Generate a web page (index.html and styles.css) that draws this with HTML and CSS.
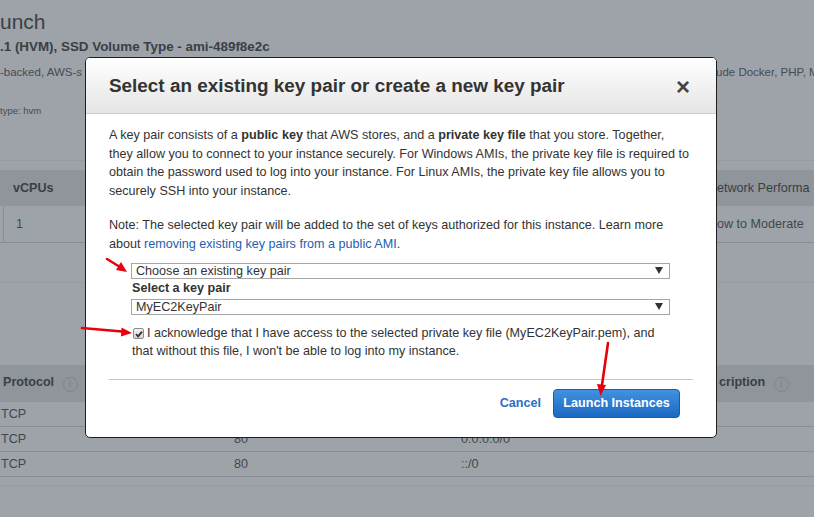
FILE: index.html
```html
<!DOCTYPE html>
<html>
<head>
<meta charset="utf-8">
<link rel="stylesheet" href="styles.css">
</head>
<body>
<div class="page">
  <div class="bg">
    <div class="bg-title">unch</div>
    <div class="bg-ami">.1 (HVM), SSD Volume Type - ami-489f8e2c</div>
    <div class="bg-desc"><span>-backed, AWS-s</span><span>ude Docker, PHP, M</span></div>
    <div class="bg-type">type: hvm</div>

    <div class="t1">
      <div class="t1-head"><span class="c1">vCPUs</span><span class="c2">etwork Performa</span></div>
      <div class="t1-row"><span class="c1">1</span><span class="c2">ow to Moderate</span></div>
      <div class="t1-gap"></div>
    </div>

    <div class="t2">
      <div class="t2-head">
        <span class="p1">Protocol <i class="info">i</i></span>
        <span class="p2"></span>
        <span class="p3"></span>
        <span class="p4">cription <i class="info">i</i></span>
      </div>
      <div class="t2-row"><span class="p1">TCP</span><span class="p2"></span><span class="p3"></span><span class="p4"></span></div>
      <div class="t2-row"><span class="p1">TCP</span><span class="p2">80</span><span class="p3">0.0.0.0/0</span><span class="p4"></span></div>
      <div class="t2-row"><span class="p1">TCP</span><span class="p2">80</span><span class="p3">::/0</span><span class="p4"></span></div>
      <div class="t2-end"></div>
    </div>
  </div>

  <div class="modal">
    <div class="modal-head">
      <h2 class="modal-title">Select an existing key pair or create a new key pair</h2>
      <span class="modal-close">&times;</span>
    </div>
    <div class="modal-body">
      <p class="para">A key pair consists of a <b>public key</b> that AWS stores, and a <b>private key file</b> that you store. Together,<br>they allow you to connect to your instance securely. For Windows AMIs, the private key file is required to<br>obtain the password used to log into your instance. For Linux AMIs, the private key file allows you to<br>securely SSH into your instance.</p>
      <p class="para para2">Note: The selected key pair will be added to the set of keys authorized for this instance. Learn more<br>about <a class="link">removing existing key pairs from a public AMI</a>.</p>
      <div class="form">
        <div class="select"><span>Choose an existing key pair</span><span class="caret"></span></div>
        <div class="label">Select a key pair</div>
        <div class="select select2"><span>MyEC2KeyPair</span><span class="caret"></span></div>
        <div class="ack"><span class="check"><svg width="8" height="8" viewBox="0 0 8 8"><path d="M1 4.2 L3.1 6.3 L7 1.6" fill="none" stroke="#333" stroke-width="1.8"/></svg></span>I acknowledge that I have access to the selected private key file (MyEC2KeyPair.pem), and<br>that without this file, I won't be able to log into my instance.</div>
      </div>
      <div class="footer">
        <a class="cancel">Cancel</a>
        <button class="launch">Launch Instances</button>
      </div>
    </div>
  </div>

  <svg class="marks" width="814" height="517" viewBox="0 0 814 517">
    <g stroke="#e8000b" stroke-width="2.6" fill="#e8000b" stroke-linecap="round">
      <line x1="107" y1="259" x2="120" y2="267"/>
      <polygon points="127,272 116,270 121,262" stroke="none"/>
      <line x1="82" y1="328" x2="122" y2="331.5"/>
      <polygon points="132,333 121,336.5 121.5,327.5" stroke="none"/>
      <line x1="608" y1="343" x2="602" y2="385"/>
      <polygon points="600.5,396 597,384 606,385" stroke="none"/>
    </g>
  </svg>
</div>
</body>
</html>
```

FILE: styles.css
```css
* { box-sizing: border-box; }
html, body { margin: 0; padding: 0; }
body {
  width: 814px;
  height: 517px;
  overflow: hidden;
  font-family: "Liberation Sans", Arial, sans-serif;
  background: #9da3a9;
}
.page { position: relative; width: 814px; height: 517px; overflow: hidden; }

/* dimmed background page */
.bg { color: #3e4347; }
.bg-title { font-size: 21px; line-height: 26px; padding-top: 9px; color: #3a3f44; }
.bg-ami { font-size: 13.4px; font-weight: bold; line-height: 18px; margin-top: 3px; color: #3a3f44; }
.bg-desc { display: grid; grid-template-columns: 716px auto; font-size: 11.5px; line-height: 16px; margin-top: 8px; color: #474c51; white-space: nowrap; }
.bg-type { font-size: 9.5px; line-height: 12px; margin-top: 25px; color: #474c51; }

.t1 { margin-top: 43px; border-top: 1px solid #959ba1; padding-top: 9px; }
.t1-head, .t1-row { display: grid; grid-template-columns: 717px auto; white-space: nowrap; font-size: 12.6px; }
.t1-head { height: 36px; background: #8f959b; align-items: center; font-weight: bold; color: #3a3f44; }
.t1-head .c1 { padding-left: 13px; }
.t1-head .c2 { font-weight: normal; }
.t1-row { height: 37px; align-items: center; border-bottom: 1px solid #878d93; color: #42474c; }
.t1-row .c1 { padding-left: 12px; border-left: 1px solid #878d93; margin-left: 3px; height: 100%; display: flex; align-items: center; }
.t1-gap { height: 40px; border-bottom: 1px solid #959ba1; }

.t2 { margin-top: 82px; }
.t2-head, .t2-row { display: grid; grid-template-columns: 234px 227px 258px auto; white-space: nowrap; font-size: 12.6px; }
.t2-head { height: 37px; background: #8f959b; align-items: center; font-weight: bold; color: #3a3f44; }
.t2-head .p1 { padding-left: 3px; }
.t2-row { height: 25px; align-items: center; border-bottom: 1px solid #888e94; color: #42474c; }
.t2-row .p1 { padding-left: 1px; }
.t2-end { height: 9px; border-bottom: 1px solid #959ba1; }
.info {
  display: inline-flex; align-items: center; justify-content: center;
  width: 15px; height: 15px; border: 1px solid #7f858b; border-radius: 50%;
  font-style: normal; font-weight: normal; font-size: 11px; color: #7f858b;
  margin-left: 5px; vertical-align: -2px;
}

/* modal */
.modal {
  position: absolute; left: 85px; top: 57px; width: 632px; height: 381px;
  background: #fff; border: 1px solid #1e1e1e; border-radius: 5px;
  overflow: hidden; color: #333;
}
.modal-head {
  height: 56px; display: flex; align-items: center; justify-content: space-between;
  padding: 0 26px 0 23px;
  background: linear-gradient(#ffffff, #e5e5e5);
  border-bottom: 1px solid #cfcfcf;
}
.modal-title { margin: 0; font-size: 18.9px; font-weight: bold; color: #333; }
.modal-close { font-size: 24px; line-height: 24px; font-weight: bold; color: #444; margin-top: 2px; }
.modal-body { padding: 12px 14px 0 23px; font-size: 12.6px; line-height: 18.6px; }
.para { margin: 0; white-space: nowrap; }
.para2 { margin-top: 16px; }
.link { color: #2361b0; text-decoration: none; }
.form { padding: 0 32px 0 22px; margin-top: 9px; }
.select {
  height: 16px; border: 1px solid #a6a6a6; display: flex; align-items: center;
  justify-content: space-between; padding: 0 6px 0 4px; font-size: 12.6px; line-height: 14px;
}
.caret { width: 0; height: 0; border-left: 4px solid transparent; border-right: 4px solid transparent; border-top: 7px solid #333; }
.label { font-weight: bold; line-height: 18px; margin-top: 0; padding-left: 1px; }
.select2 { margin-top: 2px; }
.ack { margin-top: 9px; padding-left: 1px; white-space: nowrap; }
.check {
  display: inline-flex; align-items: center; justify-content: center;
  width: 11px; height: 11px; border: 1px solid #8d8d8d; border-radius: 2px;
  background: linear-gradient(#f4f4f4, #d4d4d4); margin: 0 3px 0 1px; vertical-align: -1px;
}
.footer {
  margin: 18px 9px 0 0; border-top: 1px solid #c8c8c8; padding: 9px 13px 0 0;
  display: flex; justify-content: flex-end; align-items: center; gap: 12px;
}
.cancel { color: #2a6fc4; font-weight: bold; font-size: 12.6px; }
.launch {
  font-family: inherit; font-size: 12.6px; font-weight: bold; color: #fff;
  width: 127px; height: 29px; border: 1px solid #1a5aa6; border-radius: 4px;
  background: linear-gradient(#4192e0, #1b68c3);
  padding: 0;
}
.marks { position: absolute; left: 0; top: 0; pointer-events: none; }
```
